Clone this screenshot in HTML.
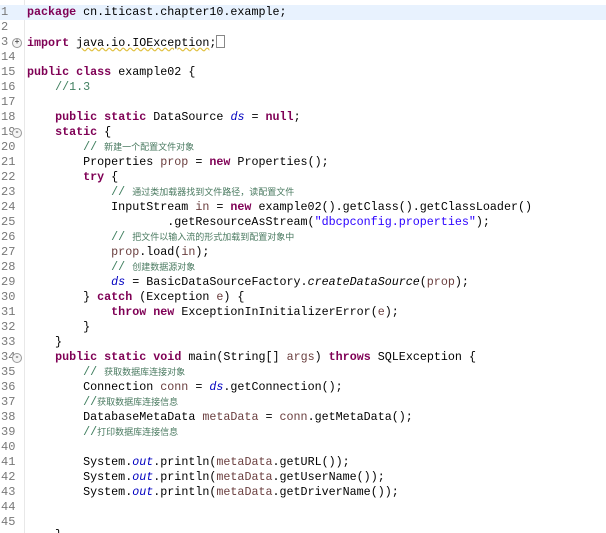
<!DOCTYPE html>
<html><head><meta charset="utf-8"><style>
html,body{margin:0;padding:0;background:#fff;width:606px;height:533px;overflow:hidden;position:relative}
.g{position:absolute;left:0;top:0;width:24px;height:533px;border-right:1px solid #e8e8e8;background:#fff}
.r{position:absolute;left:0;height:15px;width:606px;font:11.7px/15px "Liberation Mono",monospace;white-space:pre;color:#000}
.n{position:absolute;left:1px;color:#787878;font-size:12px}
.c{position:absolute;left:27px}
.k{color:#7f0055;font-weight:bold;-webkit-text-stroke:0}
.cm{color:#3f7f5f}
.z{font:9px "Noto Sans CJK SC",sans-serif;color:#4a7a60}
.s{color:#2a00ff}
.f{color:#0000c0;font-style:italic}
.v{color:#6a3e3e}
.hl{background:#e8f2fe}
.fold{position:absolute;left:12px;top:3px;width:8px;height:8px;border:1px solid #999;border-radius:50%;font-size:8px;line-height:8px;text-align:center;color:#555;font-weight:bold;background:#f4f4f4}
</style></head><body>
<div class="g"></div>
<div class="r hl" style="top:5px"><span class="n">1</span><span class="c"><span class="k">package</span> cn.iticast.chapter10.example;</span></div>
<div class="r" style="top:20px"><span class="n">2</span></div>
<div class="r" style="top:35px"><span class="n">3</span><span class="fold">+</span><span class="c"><span class="k">import</span> <span style="text-decoration:underline wavy #e0c040">java.io.IOException</span>;<span style="display:inline-block;width:7px;height:11px;border:1px solid #888;vertical-align:-2px"></span></span></div>
<div class="r" style="top:50px"><span class="n">14</span></div>
<div class="r" style="top:65px"><span class="n">15</span><span class="c"><span class="k">public</span> <span class="k">class</span> example02 {</span></div>
<div class="r" style="top:80px"><span class="n">16</span><span class="c">    <span class="cm">//1.3</span></span></div>
<div class="r" style="top:95px"><span class="n">17</span></div>
<div class="r" style="top:110px"><span class="n">18</span><span class="c">    <span class="k">public</span> <span class="k">static</span> DataSource <span class="f">ds</span> = <span class="k">null</span>;</span></div>
<div class="r" style="top:125px"><span class="n">19</span><span class="fold">-</span><span class="c">    <span class="k">static</span> {</span></div>
<div class="r" style="top:140px"><span class="n">20</span><span class="c">        <span class="cm">// </span><span class="z">新建一个配置文件对象</span></span></div>
<div class="r" style="top:155px"><span class="n">21</span><span class="c">        Properties <span class="v">prop</span> = <span class="k">new</span> Properties();</span></div>
<div class="r" style="top:170px"><span class="n">22</span><span class="c">        <span class="k">try</span> {</span></div>
<div class="r" style="top:185px"><span class="n">23</span><span class="c">            <span class="cm">// </span><span class="z">通过类加载器找到文件路径，读配置文件</span></span></div>
<div class="r" style="top:200px"><span class="n">24</span><span class="c">            InputStream <span class="v">in</span> = <span class="k">new</span> example02().getClass().getClassLoader()</span></div>
<div class="r" style="top:215px"><span class="n">25</span><span class="c">                    .getResourceAsStream(<span class="s">"dbcpconfig.properties"</span>);</span></div>
<div class="r" style="top:230px"><span class="n">26</span><span class="c">            <span class="cm">// </span><span class="z">把文件以输入流的形式加载到配置对象中</span></span></div>
<div class="r" style="top:245px"><span class="n">27</span><span class="c">            <span class="v">prop</span>.load(<span class="v">in</span>);</span></div>
<div class="r" style="top:260px"><span class="n">28</span><span class="c">            <span class="cm">// </span><span class="z">创建数据源对象</span></span></div>
<div class="r" style="top:275px"><span class="n">29</span><span class="c">            <span class="f">ds</span> = BasicDataSourceFactory.<i>createDataSource</i>(<span class="v">prop</span>);</span></div>
<div class="r" style="top:290px"><span class="n">30</span><span class="c">        } <span class="k">catch</span> (Exception <span class="v">e</span>) {</span></div>
<div class="r" style="top:305px"><span class="n">31</span><span class="c">            <span class="k">throw</span> <span class="k">new</span> ExceptionInInitializerError(<span class="v">e</span>);</span></div>
<div class="r" style="top:320px"><span class="n">32</span><span class="c">        }</span></div>
<div class="r" style="top:335px"><span class="n">33</span><span class="c">    }</span></div>
<div class="r" style="top:350px"><span class="n">34</span><span class="fold">-</span><span class="c">    <span class="k">public</span> <span class="k">static</span> <span class="k">void</span> main(String[] <span class="v">args</span>) <span class="k">throws</span> SQLException {</span></div>
<div class="r" style="top:365px"><span class="n">35</span><span class="c">        <span class="cm">// </span><span class="z">获取数据库连接对象</span></span></div>
<div class="r" style="top:380px"><span class="n">36</span><span class="c">        Connection <span class="v">conn</span> = <span class="f">ds</span>.getConnection();</span></div>
<div class="r" style="top:395px"><span class="n">37</span><span class="c">        <span class="cm">//</span><span class="z">获取数据库连接信息</span></span></div>
<div class="r" style="top:410px"><span class="n">38</span><span class="c">        DatabaseMetaData <span class="v">metaData</span> = <span class="v">conn</span>.getMetaData();</span></div>
<div class="r" style="top:425px"><span class="n">39</span><span class="c">        <span class="cm">//</span><span class="z">打印数据库连接信息</span></span></div>
<div class="r" style="top:440px"><span class="n">40</span></div>
<div class="r" style="top:455px"><span class="n">41</span><span class="c">        System.<span class="f">out</span>.println(<span class="v">metaData</span>.getURL());</span></div>
<div class="r" style="top:470px"><span class="n">42</span><span class="c">        System.<span class="f">out</span>.println(<span class="v">metaData</span>.getUserName());</span></div>
<div class="r" style="top:485px"><span class="n">43</span><span class="c">        System.<span class="f">out</span>.println(<span class="v">metaData</span>.getDriverName());</span></div>
<div class="r" style="top:500px"><span class="n">44</span></div>
<div class="r" style="top:515px"><span class="n">45</span></div>
<div class="r" style="top:528px;height:5px;overflow:hidden"><span class="c">    }</span></div>
</body></html>
